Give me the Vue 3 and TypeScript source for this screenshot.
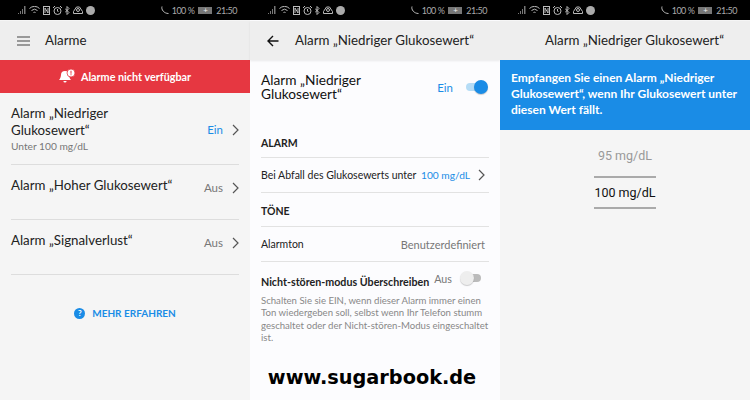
<script setup lang="ts">
const rows = [
  { title: 'Alarm „Niedriger Glukosewert“', sub: 'Unter 100 mg/dL', state: 'Ein', on: true },
  { title: 'Alarm „Hoher Glukosewert“', sub: '', state: 'Aus', on: false },
  { title: 'Alarm „Signalverlust“', sub: '', state: 'Aus', on: false },
]
const screens = [0, 1, 2]
</script>

<template>
  <div class="page">
    <section v-for="s in screens" :key="s" class="screen" :class="`screen-${s}`">
      <div class="status">
        <div class="status-left">
          <svg width="8" height="8" viewBox="0 0 8 8"><path d="M0 7h1v1H0zM2 5h1v3H2zM4 3h1v5H4zM6 0h1.500v8H6z" fill="#777" /></svg>
          <svg width="11" height="9" viewBox="0 0 11 9" fill="none" stroke="#bbb"><path d="M.5 2.500a7 7 0 0 1 10 0M2.500 4.500a4.500 4.500 0 0 1 6 0M4.500 6.500a2 2 0 0 1 2 0" /></svg>
          <svg width="7" height="9" viewBox="0 0 7 9" fill="none" stroke="#bbb"><rect x=".5" y=".5" width="6" height="8" /><path d="M2 7V2l3 5V2" /></svg>
          <svg width="9" height="9" viewBox="0 0 9 9" fill="none" stroke="#bbb"><circle cx="4.500" cy="5" r="3.500" /><path d="M4.500 3v2l1 1M0 2l2-2M9 2L7 0" /></svg>
          <svg width="5" height="9" viewBox="0 0 5 9" fill="none" stroke="#bbb"><path d="M0 2.500l4 4-2 2v-8l2 2-4 4" /></svg>
          <svg width="10" height="8" viewBox="0 0 10 8" fill="none" stroke="#bbb"><path d="M.5 7.500h9v-2L6.500 1h-3L.5 5.500z" /><circle cx="5" cy="4" r="1.500" /></svg>
          <svg width="9" height="9" viewBox="0 0 9 9"><circle cx="4.500" cy="4.500" r="4.500" fill="#aaa" /></svg>
        </div>
        <div class="status-right">
          <svg width="8" height="8" viewBox="0 0 8 8" fill="none" stroke="#bbb"><path d="M1 .5c-1 3 2 7 6.500 7" /></svg>
          <span>100 %</span>
          <span class="battery"><i>+</i></span>
          <span>21:50</span>
        </div>
      </div>

      <header class="topbar">
        <svg v-if="s === 0" class="top-icon" width="14" height="10" viewBox="0 0 14 10" fill="none" stroke="#444" stroke-width="1.200"><path d="M0 1h13M0 5h13M0 9h13" /></svg>
        <svg v-else-if="s === 1" class="top-icon" width="14" height="12" viewBox="0 0 14 12" fill="none" stroke="#111" stroke-width="1.400"><path d="M11.500 6H1M6 1L1 6l5 5" /></svg>
        <span v-else class="top-icon"></span>
        <h1>{{ s === 0 ? 'Alarme' : 'Alarm „Niedriger Glukosewert“' }}</h1>
      </header>

      <template v-if="s === 0">
        <div class="banner">
          <svg width="17" height="15" viewBox="0 0 17 15" fill="#fff">
            <path d="M6 2a4 4 0 0 1 4 4c.2 2.200.8 3.800 2 5H0c1.200-1.200 1.800-2.800 2-5a4 4 0 0 1 4-4zM4.400 12h3.200a1.600 1.600 0 0 1-3.200 0z" />
            <circle cx="12" cy="4" r="4" stroke="#e63741" stroke-width=".8" />
            <path d="M11.500 1.800h1v3h-1zM11.500 5.200h1v1h-1z" fill="#e63741" />
          </svg>
          <span>Alarme nicht verfügbar</span>
        </div>
        <div class="alarm-list">
          <div v-for="r in rows" :key="r.title" class="alarm-row" :class="{ tall: r.on }">
            <div class="alarm-text">
              <div class="alarm-title">{{ r.title }}</div>
              <div v-if="r.sub" class="alarm-sub">{{ r.sub }}</div>
            </div>
            <span class="alarm-state" :class="{ on: r.on }">{{ r.state }}</span>
            <svg class="chev" width="7" height="12" viewBox="0 0 7 12" fill="none" stroke="#555" stroke-width="1.200"><path d="M1 1l5 5-5 5" /></svg>
          </div>
        </div>
        <div class="more">
          <span class="more-icon">?</span>
          <span>MEHR ERFAHREN</span>
        </div>
      </template>

      <template v-else-if="s === 1">
        <div class="detail">
          <div class="main-toggle">
            <div class="main-title">Alarm „Niedriger Glukosewert“</div>
            <span class="on-label">Ein</span>
            <span class="switch on"><i></i></span>
          </div>
          <div class="section-label first">ALARM</div>
          <div class="setting">
            <span class="setting-name">Bei Abfall des Glukosewerts unter</span>
            <span class="setting-value blue">100 mg/dL</span>
            <svg class="chev" width="7" height="12" viewBox="0 0 7 12" fill="none" stroke="#555" stroke-width="1.200"><path d="M1 1l5 5-5 5" /></svg>
          </div>
          <div class="section-label">TÖNE</div>
          <div class="setting">
            <span class="setting-name">Alarmton</span>
            <span class="setting-value">Benutzerdefiniert</span>
          </div>
          <div class="dnd">
            <span class="dnd-name">Nicht-stören-modus Überschreiben</span>
            <span class="dnd-state">Aus</span>
            <span class="switch"><i></i></span>
          </div>
          <p class="dnd-text">Schalten Sie sie EIN, wenn dieser Alarm immer einen Ton wiedergeben soll, selbst wenn Ihr Telefon stumm geschaltet oder der Nicht-stören-Modus eingeschaltet ist.</p>
          <div class="watermark">www.sugarbook.de</div>
        </div>
      </template>

      <template v-else>
        <div class="info">Empfangen Sie einen Alarm „Niedriger Glukosewert“, wenn Ihr Glukosewert unter diesen Wert fällt.</div>
        <div class="picker">
          <div class="pick muted">95 mg/dL</div>
          <div class="pick selected">100 mg/dL</div>
        </div>
      </template>
    </section>
  </div>
</template>

<style scoped>
.page {
  display: grid;
  grid-template-columns: repeat(3, 250px);
  width: 750px;
  height: 400px;
  overflow: hidden;
  font-family: Lato, "Open Sans", sans-serif;
  color: #222;
}
.screen { display: flex; flex-direction: column; height: 400px; background: #f5f5f5; }
.screen-1 { background: #fcfcfe; }

.status {
  display: flex;
  justify-content: space-between;
  align-items: center;
  height: 20px;
  padding: 0 13px 0 18px;
  background: #000;
  color: #aaa;
  font-size: 9px;
  letter-spacing: -0.5px;
  flex: none;
}
.status-left, .status-right { display: flex; align-items: center; gap: 3px; }
.battery {
  position: relative;
  display: inline-flex;
  align-items: center;
  justify-content: center;
  width: 14px;
  height: 7px;
  background: #777;
  margin: 0 1px;
}
.battery i { font-style: normal; color: #eee; font-size: 8px; line-height: 7px; }

.topbar {
  display: flex;
  align-items: center;
  height: 39px;
  margin-top: 1px;
  padding-left: 17px;
  background: #eee;
  flex: none;
}
.top-icon { width: 14px; margin-right: 14px; flex: none; }
.topbar h1 { margin: 0 0 1px; font-size: 13.300px; font-weight: 400; color: #222; white-space: nowrap; }
.screen-1 .topbar { box-shadow: 0 1px 2px rgba(0, 0, 0, 0.08); }

.banner {
  display: flex;
  align-items: center;
  justify-content: center;
  gap: 5px;
  height: 33px;
  background: #e63741;
  color: #fff;
  font-size: 10.800px;
  font-weight: 700;
  flex: none;
}

.alarm-list { padding: 0 11px; }
.alarm-row {
  display: flex;
  align-items: flex-start;
  height: 55px;
  padding-top: 12px;
  box-sizing: border-box;
  border-bottom: 1px solid #ddd;
}
.alarm-row.tall { height: 72px; }
.alarm-text { flex: 1; width: 160px; }
.alarm-title { font-size: 13.300px; line-height: 17px; max-width: 130px; }
.alarm-row:not(.tall) .alarm-title { max-width: none; }
.alarm-sub { font-size: 10.200px; color: #777; line-height: 14px; }
.alarm-state { font-size: 11.500px; color: #777; margin: 4px 9px 0 0; }
.alarm-state.on { color: #1a8ce6; margin-top: 18px; }
.alarm-row .chev { margin-top: 5px; }
.alarm-row.tall .chev { margin-top: 19px; }

.more {
  display: flex;
  align-items: center;
  justify-content: center;
  gap: 7px;
  margin-top: 32px;
  color: #1a8ce6;
  font-size: 10px;
  font-weight: 700;
}
.more-icon {
  display: flex;
  align-items: center;
  justify-content: center;
  width: 11px;
  height: 11px;
  border-radius: 50%;
  background: #1a8ce6;
  color: #fff;
  font-size: 8px;
  font-weight: 700;
}

.detail { padding: 10px 11px 0; flex: 1; }
.main-toggle { display: flex; align-items: center; height: 34px; }
.main-title { flex: 1; font-size: 13.700px; line-height: 14px; color: #111; max-width: 135px; margin-right: auto; }
.on-label { margin-left: auto; font-size: 11.500px; color: #1a8ce6; margin-right: 13px; }
.switch {
  position: relative;
  display: inline-block;
  width: 20px;
  height: 8px;
  border-radius: 4px;
  background: #bbb;
  margin-right: 3px;
}
.switch i {
  position: absolute;
  left: -1px;
  top: -3px;
  width: 14px;
  height: 14px;
  border-radius: 50%;
  background: #eee;
  box-shadow: 0 1px 1px rgba(0, 0, 0, 0.2);
}
.switch.on { background: #b5dcf6; }
.switch.on i { left: 8px; background: #1a8ce6; }

.section-label {
  font-size: 10.500px;
  font-weight: 700;
  color: #222;
  height: 34px;
  line-height: 36px;
  border-bottom: 1px solid #e2e2e2;
  box-sizing: border-box;
}
.section-label.first { margin-top: 30px; height: 24px; line-height: 12px; padding-top: 3px; }
.setting {
  display: flex;
  align-items: center;
  height: 35px;
  border-bottom: 1px solid #e2e2e2;
  font-size: 10.500px;
  box-sizing: border-box;
}
.setting-name { flex: 1; white-space: nowrap; }
.setting-value { color: #777; font-size: 11px; margin-right: 4px; white-space: nowrap; }
.setting-value.blue { color: #1a8ce6; font-size: 10.200px; margin-right: 8px; }
.setting .chev { margin-right: 4px; }

.dnd { display: flex; align-items: center; margin-top: 9px; height: 20px; }
.dnd-name { font-size: 10.700px; font-weight: 700; white-space: nowrap; }
.dnd-state { font-size: 10.700px; color: #777; margin: -6px 0 0 5px; }
.dnd .switch { margin-left: auto; margin-right: 8px; margin-top: -6px; }
.dnd-text { margin: 4px 0 0; font-size: 9.600px; line-height: 12.400px; color: #888; }
.watermark {
  margin-top: 21px;
  padding-right: 6px;
  text-align: center;
  font-family: "DejaVu Sans", sans-serif;
  font-size: 19.300px;
  font-weight: 700;
  color: #000;
  white-space: nowrap;
}

.info {
  height: 70px;
  padding: 10px 8px 0 11px;
  box-sizing: border-box;
  background: #1a8ce6;
  color: #fff;
  font-size: 12px;
  line-height: 16px;
  font-weight: 700;
  flex: none;
}
.picker { display: flex; flex-direction: column; align-items: center; margin-top: 16px; }
.pick { width: 62px; box-sizing: border-box; text-align: center; font-size: 12.500px; font-family: Roboto, sans-serif; white-space: nowrap; }
.muted { color: #999; height: 32px; line-height: 20px; border-bottom: 2px solid #aaa; }
.selected { color: #111; height: 31px; line-height: 30px; border-bottom: 2px solid #aaa; }
</style>
